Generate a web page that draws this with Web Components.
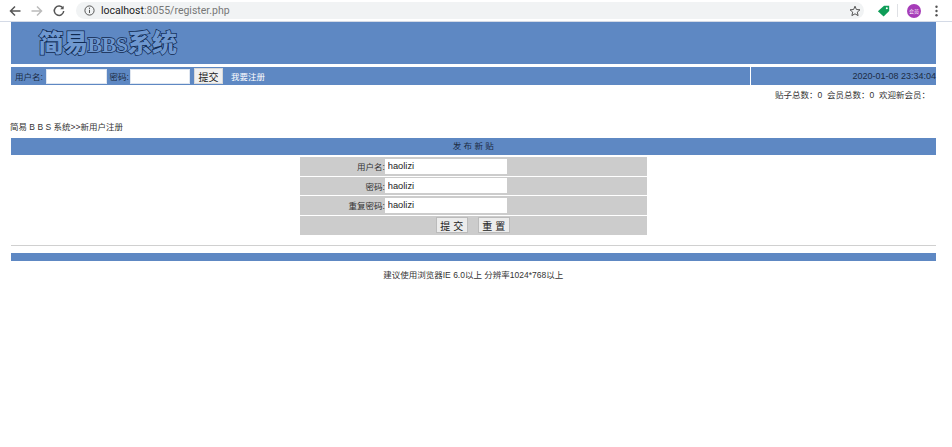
<!DOCTYPE html>
<html lang="zh">
<head>
<meta charset="utf-8">
<title>register</title>
<style>
    html, body { margin: 0; padding: 0; background: #fff; }
    body { font: 8.5px "Liberation Sans", "Noto Sans CJK SC", sans-serif; color: #333; }
</style>
</head>
<body>
<browser-bar url-host="localhost" url-rest=":8055/register.php"></browser-bar>
<bbs-page>
    <bbs-banner>简易<small>BBS</small>系统</bbs-banner>
    <bbs-nav date="2020-01-08 23:34:04"></bbs-nav>
    <bbs-stats>贴子总数：0&nbsp; 会员总数：0&nbsp; 欢迎新会员：</bbs-stats>
    <bbs-crumb>简易 B B S 系统&gt;&gt;新用户注册</bbs-crumb>
    <bbs-bar>发 布 新 贴</bbs-bar>
    <register-form></register-form>
    <bbs-footer>建议使用浏览器IE 6.0以上 分辨率1024*768以上</bbs-footer>
</bbs-page>

<script>
const CJK = '"Liberation Sans", "Noto Sans CJK SC", sans-serif';
const BLUE = "#5e88c3";

class BrowserBar extends HTMLElement {
    constructor() {
        super();
        this.attachShadow({ mode: "open" });
    }
    connectedCallback() {
        this.shadowRoot.innerHTML = `
            <style>
                :host{
                    display: flex;
                    align-items: center;
                    height: 21px;
                    background: #fff;
                    border-bottom: 1px solid #d4dae6;
                }
                svg{ display: block; flex: none; }
                #nav{ display: flex; align-items: center; gap: 10px; padding-left: 9px; }
                #url{
                    flex: 1;
                    height: 17px;
                    margin-left: 11px;
                    background: #f1f3f4;
                    border-radius: 9px;
                    display: flex;
                    align-items: center;
                    padding: 0 3px 0 8px;
                    font: 10.5px "Roboto", "Liberation Sans", sans-serif;
                    color: #222;
                }
                #url span{ color: #777; }
                #url svg:first-child{ margin-right: 6px; }
                #star{ margin-left: auto; }
                #tools{ display: flex; align-items: center; padding: 0 14px 0 13px; }
                #sep{ width: 1px; height: 13px; background: #dfe1e5; margin: 0 9px 0 7px; }
                #avatar{
                    width: 14px; height: 14px; border-radius: 50%;
                    background: #a63cb8; color: #fff;
                    font: 5px ${CJK};
                    display: flex; align-items: center; justify-content: center;
                    margin-right: 14px;
                }
            </style>
            <div id="nav">
                <svg width="12" height="12" viewBox="0 0 12 12" fill="none" stroke="#555" stroke-width="1.5"><path d="M11.5 6H1.5M6 1.5 1.5 6 6 10.5"/></svg>
                <svg width="12" height="12" viewBox="0 0 12 12" fill="none" stroke="#bbb" stroke-width="1.5"><path d="M.5 6h10M6 1.5 10.5 6 6 10.5"/></svg>
                <svg width="12" height="12" viewBox="0 0 12 12" fill="none" stroke="#555" stroke-width="1.5"><path d="M10 3.2A4.7 4.7 0 1 0 10.7 6"/><path d="M10.6.8v3.4H7.2" fill="#555" stroke="none"/></svg>
            </div>
            <div id="url">
                <svg width="11" height="11" viewBox="0 0 11 11" fill="none" stroke="#555"><circle cx="5.5" cy="5.5" r="4.6"/><path d="M5.5 4.8v3.2M5.5 2.7v1.2"/></svg>
                ${this.getAttribute("url-host")}<span>${this.getAttribute("url-rest")}</span>
                <svg id="star" width="12" height="12" viewBox="0 0 12 12" fill="none" stroke="#555"><path d="M6 1.2 7.4 4.5 11 4.8 8.3 7.1 9.1 10.6 6 8.8 2.9 10.6 3.7 7.1 1 4.8 4.6 4.5Z"/></svg>
            </div>
            <div id="tools">
                <svg width="13" height="12" viewBox="0 0 13 12"><path d="M7 .8h5.2v5.1L6.6 11.5.9 6.200Z" fill="#0f9d58"/><circle cx="9.800" cy="3.200" r="1" fill="#fff"/></svg>
                <div id="sep"></div>
                <div id="avatar">会员</div>
                <svg width="3" height="12" viewBox="0 0 3 12" fill="#555"><circle cx="1.500" cy="1.800" r="1.200"/><circle cx="1.500" cy="6" r="1.200"/><circle cx="1.500" cy="10.200" r="1.200"/></svg>
            </div>
        `;
    }
}

class BbsPage extends HTMLElement {
    constructor() {
        super();
        this.attachShadow({ mode: "open" });
        this.shadowRoot.innerHTML = `
            <style>
                :host{
                    display: block;
                    width: 925.500px;
                    margin-left: 10.500px;
                    font: 8.5px ${CJK};
                    color: #333;
                }
            </style>
            <slot></slot>
        `;
    }
}

class BbsBanner extends HTMLElement {
    constructor() {
        super();
        this.attachShadow({ mode: "open" });
        this.shadowRoot.innerHTML = `
            <style>
                :host{
                    display: block;
                    height: 42px;
                    background: ${BLUE};
                    box-sizing: border-box;
                    padding: 3px 0 0 28px;
                    font: 900 25px/32px "Noto Sans CJK SC", sans-serif;
                    letter-spacing: -0.5px;
                    color: #6f98d0;
                    -webkit-text-stroke: 1.4px #10294f;
                    paint-order: stroke fill;
                }
                ::slotted(small){
                    font: bold 22px "Liberation Serif", serif;
                    letter-spacing: -0.5px;
                }
            </style>
            <slot></slot>
        `;
    }
}

class BbsNav extends HTMLElement {
    constructor() {
        super();
        this.attachShadow({ mode: "open" });
    }
    connectedCallback() {
        this.shadowRoot.innerHTML = `
            <style>
                :host{
                    display: flex;
                    margin-top: 3px;
                    height: 18px;
                    gap: 1px;
                    font-size: 8.5px;
                    color: #1c2c44;
                }
                #left{
                    flex: 1;
                    background: ${BLUE};
                    display: flex;
                    align-items: center;
                    padding-left: 4.500px;
                }
                #right{
                    width: 185px;
                    background: ${BLUE};
                    display: flex;
                    align-items: center;
                    justify-content: flex-end;
                    white-space: nowrap;
                    font-size: 9px;
                }
                input{
                    width: 60.500px; height: 15px; margin: 0; padding: 0 1px;
                    box-sizing: border-box; border: 0;
                    background: #fff;
                    box-shadow: inset 0 0 0 1px #dfe6f0;
                }
                #name-label{ width: 31px; white-space: nowrap; }
                #pass-label{ width: 20px; margin-left: 3px; white-space: nowrap; }
                #pass{ margin-right: 4px; }
                button{
                    width: 29px; height: 16px; padding: 0; margin: 0;
                    border: 1px solid #d8d8d8; background: #f0f0f0;
                    font: 10px ${CJK}; color: #222;
                }
                a{ color: #fff; text-decoration: none; margin-left: 8px; font-size: 8.5px; }
            </style>
            <div id="left">
                <span id="name-label">用户名:</span><input><span id="pass-label">密码:</span><input id="pass"><button>提交</button><a href="#">我要注册</a>
            </div>
            <div id="right">${this.getAttribute("date")}</div>
        `;
    }
}

class BbsStats extends HTMLElement {
    constructor() {
        super();
        this.attachShadow({ mode: "open" });
        this.shadowRoot.innerHTML = `
            <style>
                :host{
                    display: block;
                    margin-top: 4px;
                    height: 12px;
                    line-height: 12px;
                    text-align: right;
                    padding-right: 6px;
                }
            </style>
            <slot></slot>
        `;
    }
}

class BbsCrumb extends HTMLElement {
    constructor() {
        super();
        this.attachShadow({ mode: "open" });
        this.shadowRoot.innerHTML = `
            <style>
                :host{
                    display: block;
                    margin-top: 20px;
                    height: 12px;
                    line-height: 12px;
                    margin-left: -0.500px;
                }
            </style>
            <slot></slot>
        `;
    }
}

class BbsBar extends HTMLElement {
    constructor() {
        super();
        this.attachShadow({ mode: "open" });
        this.shadowRoot.innerHTML = `
            <style>
                :host{
                    display: block;
                    margin-top: 5px;
                    height: 17px;
                    line-height: 16px;
                    background: ${BLUE};
                    text-align: center;
                    color: #1c2c44;
                }
            </style>
            <slot></slot>
        `;
    }
}

class FormRow extends HTMLElement {
    constructor() {
        super();
        this.attachShadow({ mode: "open" });
    }
    connectedCallback() {
        this.shadowRoot.innerHTML = `
            <style>
                :host{
                    display: grid;
                    grid-template-columns: 85px 1fr;
                    align-items: center;
                    height: 18.500px;
                    background: #ccc;
                    color: #333;
                }
                label{ text-align: right; white-space: nowrap; }
                input{
                    width: 122px; height: 15px; margin: 0; padding: 0 3px;
                    box-sizing: border-box; border: 0;
                    background: #fff;
                    font: 9.3px "Liberation Sans", sans-serif;
                    color: #222;
                }
            </style>
            <label>${this.getAttribute("label")}:</label>
            <input value="${this.getAttribute("value")}">
        `;
    }
}

class RegisterForm extends HTMLElement {
    constructor() {
        super();
        this.attachShadow({ mode: "open" });
        this.shadowRoot.innerHTML = `
            <style>
                :host{
                    display: flex;
                    flex-direction: column;
                    gap: 1px;
                    width: 347px;
                    margin: 2px auto 0;
                    font-size: 8.5px;
                }
                #buttons{
                    display: flex;
                    justify-content: center;
                    align-items: center;
                    gap: 10px;
                    height: 19px;
                    background: #ccc;
                    padding-right: 1px;
                }
                button{
                    width: 32px; height: 16px; padding: 0; margin: 0;
                    border: 1px solid #bbb; background: #ececec;
                    font: 10px ${CJK}; color: #222;
                }
            </style>
            <form-row label="用户名" value="haolizi"></form-row>
            <form-row label="密码" value="haolizi"></form-row>
            <form-row label="重复密码" value="haolizi"></form-row>
            <div id="buttons"><button>提 交</button><button>重 置</button></div>
        `;
    }
}

class BbsFooter extends HTMLElement {
    constructor() {
        super();
        this.attachShadow({ mode: "open" });
        this.shadowRoot.innerHTML = `
            <style>
                :host{
                    display: block;
                    margin-top: 10px;
                    text-align: center;
                }
                hr{ margin: 0; border: 0; border-top: 1px solid #d0d0d0; }
                #strip{ height: 8px; background: ${BLUE}; margin-top: 7px; }
                p{ margin: 8px 0 0; line-height: 12px; }
            </style>
            <hr>
            <div id="strip"></div>
            <p><slot></slot></p>
        `;
    }
}

customElements.define("browser-bar", BrowserBar);
customElements.define("bbs-page", BbsPage);
customElements.define("bbs-banner", BbsBanner);
customElements.define("bbs-nav", BbsNav);
customElements.define("bbs-stats", BbsStats);
customElements.define("bbs-crumb", BbsCrumb);
customElements.define("bbs-bar", BbsBar);
customElements.define("form-row", FormRow);
customElements.define("register-form", RegisterForm);
customElements.define("bbs-footer", BbsFooter);
</script>
</body>
</html>
